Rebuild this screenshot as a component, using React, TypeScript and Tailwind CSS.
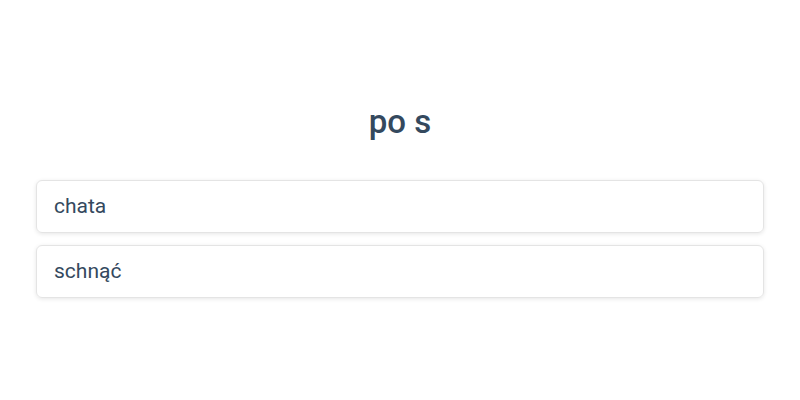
import React from 'react';

const options = ['chata', 'schnąć'];

export default function App() {
  return (
    <div className="w-[800px] h-[400px] bg-white px-9 pt-[102px] font-['Roboto',sans-serif]">
      <h1 className="text-center text-[33px] leading-[40px] font-medium text-[#34495e]">po s</h1>
      <div className="mt-[38px] flex flex-col gap-[12px]">
        {options.map((o) => (
          <div
            key={o}
            className="h-[53px] flex items-center px-[17px] rounded-md border border-[#e4e4e4] shadow-[0_1px_4px_rgba(0,0,0,0.1)] text-[21px] text-[#34495e]"
          >
            {o}
          </div>
        ))}
      </div>
    </div>
  );
}
